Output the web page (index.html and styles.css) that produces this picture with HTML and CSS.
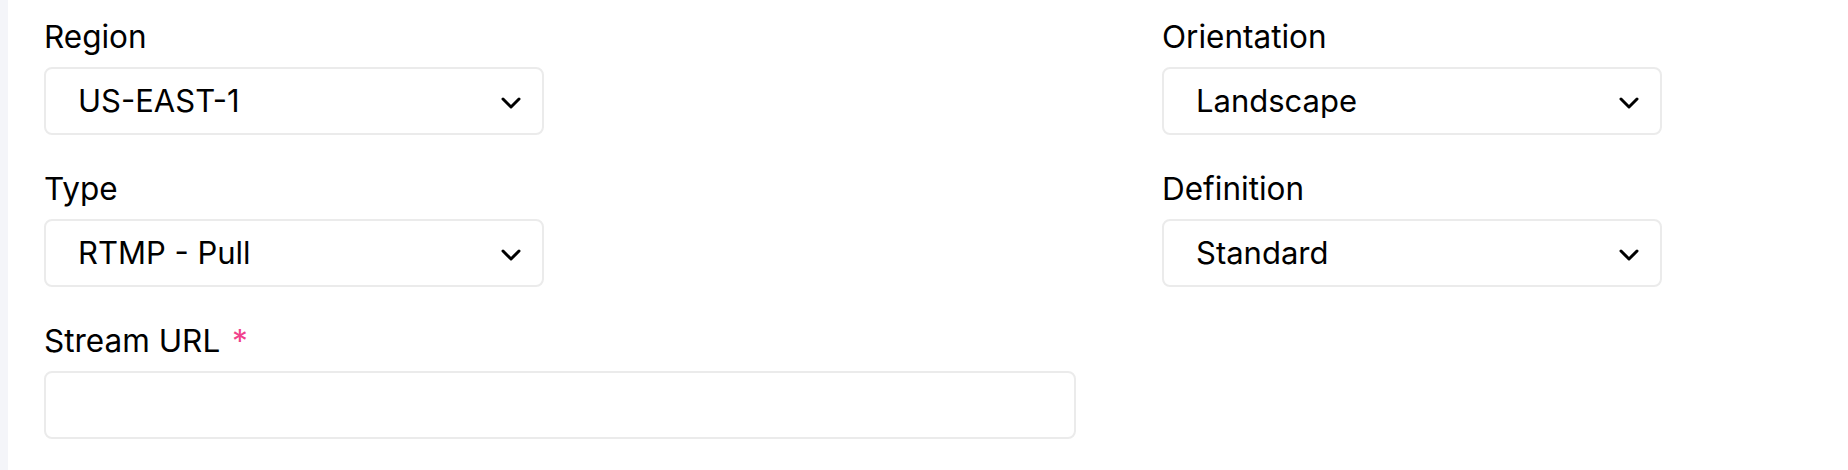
FILE: index.html
```html
<!DOCTYPE html>
<html lang="en">
<head>
<meta charset="utf-8">
<title>Stream settings</title>
<link rel="stylesheet" href="styles.css">
</head>
<body>
<div class="page">
  <div class="rail"></div>
  <div class="content">
    <div class="column left">
      <div class="field">
        <label class="label">Region</label>
        <div class="select">
          <span class="value">US-EAST-1</span>
          <svg class="chev" width="20" height="12" viewBox="0 0 20 12"><path d="M2 2 L10 10 L18 2" fill="none" stroke="#000" stroke-width="3" stroke-linecap="round" stroke-linejoin="round"/></svg>
        </div>
      </div>
      <div class="field">
        <label class="label">Type</label>
        <div class="select">
          <span class="value">RTMP - Pull</span>
          <svg class="chev" width="20" height="12" viewBox="0 0 20 12"><path d="M2 2 L10 10 L18 2" fill="none" stroke="#000" stroke-width="3" stroke-linecap="round" stroke-linejoin="round"/></svg>
        </div>
      </div>
      <div class="field">
        <label class="label">Stream URL <span class="req">*</span></label>
        <div class="input wide"></div>
      </div>
    </div>
    <div class="column right">
      <div class="field">
        <label class="label">Orientation</label>
        <div class="select">
          <span class="value">Landscape</span>
          <svg class="chev" width="20" height="12" viewBox="0 0 20 12"><path d="M2 2 L10 10 L18 2" fill="none" stroke="#000" stroke-width="3" stroke-linecap="round" stroke-linejoin="round"/></svg>
        </div>
      </div>
      <div class="field">
        <label class="label">Definition</label>
        <div class="select">
          <span class="value">Standard</span>
          <svg class="chev" width="20" height="12" viewBox="0 0 20 12"><path d="M2 2 L10 10 L18 2" fill="none" stroke="#000" stroke-width="3" stroke-linecap="round" stroke-linejoin="round"/></svg>
        </div>
      </div>
    </div>
  </div>
</div>
</body>
</html>
```
FILE: styles.css
```css
* { box-sizing: border-box; }
html, body {
  margin: 0;
  padding: 0;
  background: #ffffff;
  font-family: Inter, "Noto Sans", "Liberation Sans", sans-serif;
  color: #000;
}
.page {
  display: flex;
  width: 1848px;
  height: 470px;
  overflow: hidden;
}
.rail {
  width: 8px;
  flex: none;
  background: #f4f5f9;
}
.content {
  display: flex;
  padding: 18px 0 0 36px;
}
.column.left { width: 1118px; }
.column.right { width: 520px; }
.field {
  display: flex;
  flex-direction: column;
  gap: 12px;
  margin-bottom: 35px;
}
.label {
  font-size: 31.5px;
  line-height: 37px;
  font-weight: 400;
  color: #000;
}
.req { color: #f0418c; margin-left: 3px; }
.select, .input {
  height: 68px;
  width: 500px;
  border: 2px solid #ebebeb;
  border-radius: 8px;
  background: #fff;
}
.select {
  display: flex;
  align-items: center;
  justify-content: space-between;
  padding: 0 21px 0 32px;
}
.value {
  font-size: 31px;
  line-height: 40px;
  color: #000;
}
.chev { margin-top: 3px; }
.input.wide { width: 1032px; }
```
